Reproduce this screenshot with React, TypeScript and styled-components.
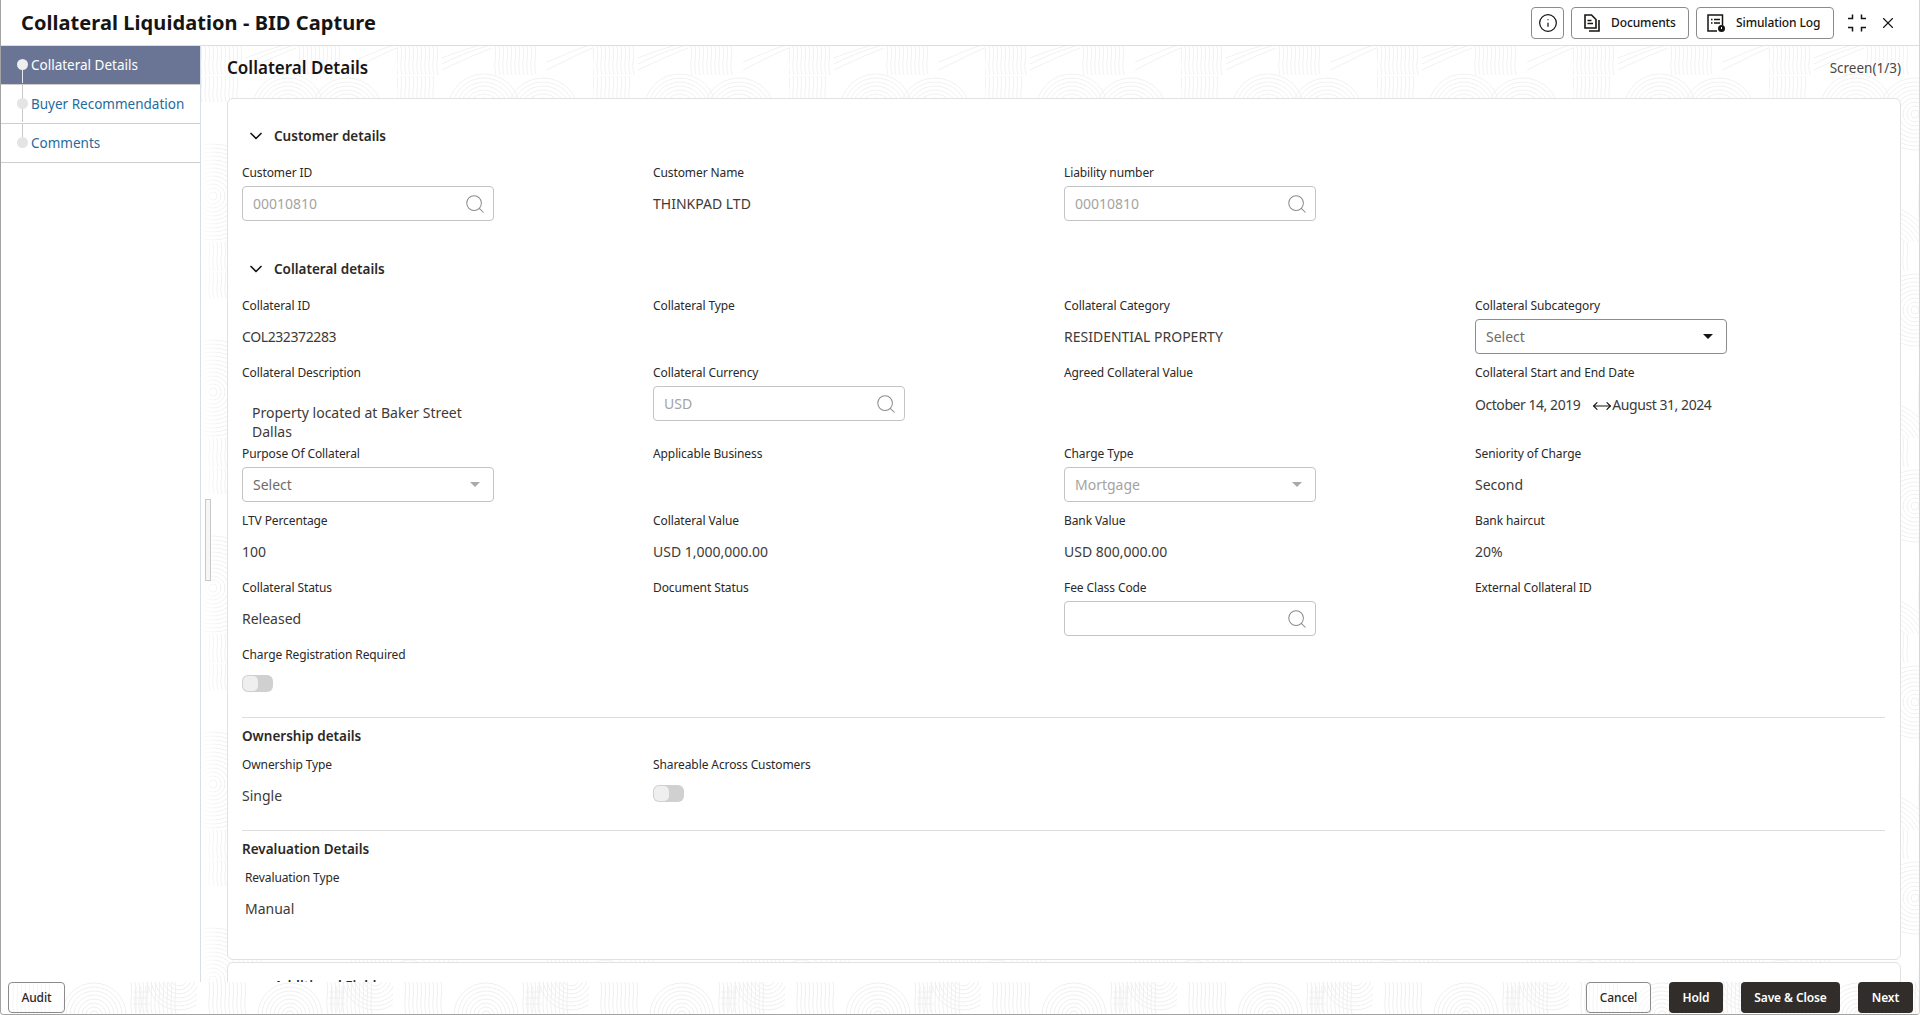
import React from "react";
import styled, { createGlobalStyle } from "styled-components";
import { ChevronDown, Info, MoveHorizontal, Search, X } from "lucide-react";

const Global = createGlobalStyle`
  html, body { margin: 0; padding: 0; background: #fff; }
  * { box-sizing: border-box; }
  body { font-family: "Noto Sans", "Open Sans", sans-serif; color: #161513; }
`;

const Shell = styled.div`
  position: relative;
  height: 1015px;
  width: 1920px;
  display: flex;
  flex-direction: column;
  overflow: hidden;
  border-left: 1px solid #a3a3a3;
  border-right: 1px solid #d6d6d6;
  border-bottom: 1px solid #a3a3a3;
  border-radius: 0 0 4px 4px;
`;

const Header = styled.header`
  height: 46px;
  flex: none;
  display: flex;
  align-items: center;
  justify-content: space-between;
  padding: 0 22px 0 20px;
  border-bottom: 1px solid #dedede;
  background: #fff;
`;

const Title = styled.h1`
  margin: 0;
  font-size: 20px;
  line-height: 28px;
  font-weight: 700;
  letter-spacing: 0.07px;
  color: #161513;
`;

const Actions = styled.div`
  display: flex;
  align-items: center;
  gap: 7px;
`;

const OutlineButton = styled.button<{ $width?: number; $pad?: number }>`
  height: 32px;
  width: ${(p) => (p.$width ? `${p.$width}px` : "auto")};
  padding: 0 0 0 ${(p) => p.$pad ?? 12}px;
  display: inline-flex;
  align-items: center;
  gap: 11px;
  border: 1px solid #8b8b8b;
  border-radius: 4px;
  background: #fff;
  font: 500 12px "Noto Sans", sans-serif;
  letter-spacing: -0.1px;
  color: #161513;
  white-space: nowrap;
`;

const IconSquare = styled(OutlineButton)`
  width: 33px;
  padding: 0;
  justify-content: center;
`;

const WindowIcons = styled.div`
  display: flex;
  align-items: center;
  gap: 12px;
  margin-left: 6px;
`;

const Body = styled.div`
  flex: 1;
  min-height: 0;
  display: flex;
`;

const Sidebar = styled.nav`
  width: 200px;
  flex: none;
  background: #fff;
  border-right: 1px solid #d7dfe8;
`;

const NavItem = styled.div<{ $active?: boolean }>`
  height: 39px;
  display: flex;
  align-items: stretch;
  gap: 4px;
  padding-left: 16px;
  background: ${(p) => (p.$active ? "#6a7494" : "#fff")};
  border-bottom: 1px solid #d0cecb;
  color: ${(p) => (p.$active ? "#fff" : "#1f6b9e")};
  font-size: 13.5px;
`;

const Rail = styled.div`
  width: 10px;
  flex: none;
  display: flex;
  flex-direction: column;
  align-items: center;
`;

const RailLine = styled.span<{ $active?: boolean; $hidden?: boolean; $size: number }>`
  width: 1px;
  height: ${(p) => p.$size}px;
  background: ${(p) => (p.$hidden ? "transparent" : p.$active ? "#e8e8ee" : "#c9c9c9")};
`;

const Dot = styled.span<{ $active?: boolean }>`
  width: 11px;
  height: 11px;
  flex: none;
  border-radius: 50%;
  background: ${(p) => (p.$active ? "#eeeeee" : "#e4e4e4")};
`;

const NavLabel = styled.span`
  line-height: 38px;
  white-space: nowrap;
`;

const Main = styled.main`
  position: relative;
  flex: 1;
  min-width: 0;
  padding: 0 18px 0 26px;
  overflow: hidden;
  &::before {
    content: "";
    position: absolute;
    left: 0;
    top: 60px;
    bottom: 0;
    width: 18px;
    background: linear-gradient(90deg, rgba(255,255,255,0.95), rgba(255,255,255,0));
    z-index: 1;
  }
`;

const PatternSvg = styled.svg`
  position: absolute;
  inset: 0;
  width: 100%;
  height: 100%;
  pointer-events: none;
`;

const Splitter = styled.span`
  position: absolute;
  left: 4px;
  top: 453px;
  width: 6px;
  height: 82px;
  border: 1px solid #c8c8c8;
  background: #f6f6f6;
  z-index: 2;
`;

const ContentHead = styled.div`
  position: relative;
  height: 52px;
  display: flex;
  align-items: center;
  justify-content: space-between;
  padding-bottom: 8px;
`;

const PageTitle = styled.h2`
  margin: 0;
  font-size: 17px;
  line-height: 24px;
  font-weight: 600;
  color: #161513;
`;

const ScreenCount = styled.span`
  font-size: 13.5px;
  color: #4a4744;
`;

const Card = styled.section`
  position: relative;
  background: #fff;
  border: 1px solid #e2e2e2;
  border-radius: 6px;
  padding: 24px 15px 24px 14px;
`;

const NextCard = styled(Card)`
  margin-top: 2px;
  height: 60px;
  padding: 10px 15px 0 14px;
`;

const AccordionHead = styled.div<{ $gap?: number }>`
  height: 24px;
  display: flex;
  align-items: center;
  gap: 8px;
  padding: 1px 0 0 4px;
  margin-top: ${(p) => p.$gap ?? 0}px;
  margin-bottom: 16px;
  font-size: 13.5px;
  font-weight: 600;
  color: #2b2927;
`;

const Grid = styled.div`
  display: grid;
  grid-template-columns: repeat(4, 411px);
`;

const Field = styled.div<{ $indent?: number }>`
  padding-bottom: 9px;
  padding-left: ${(p) => p.$indent ?? 0}px;
  min-width: 0;
`;

const Label = styled.div`
  height: 20px;
  line-height: 20px;
  font-size: 12px;
  letter-spacing: -0.1px;
  color: #2b2927;
  margin-bottom: 4px;
  white-space: nowrap;
`;

const Value = styled.div<{ $tight?: boolean }>`
  height: 34px;
  line-height: 34px;
  font-size: 14px;
  letter-spacing: ${(p) => (p.$tight ? "-0.4px" : "normal")};
  color: #3d3a38;
  white-space: nowrap;
`;

const Description = styled.div`
  height: 48px;
  padding: 16px 0 0 10px;
  font-size: 14px;
  line-height: 19px;
  color: #3d3a38;
  width: 252px;
`;

const Box = styled.div<{ $strong?: boolean }>`
  width: 252px;
  height: 35px;
  margin-top: -1px;
  display: flex;
  align-items: center;
  justify-content: space-between;
  padding: 0 10px;
  background: #fff;
  border: 1px solid ${(p) => (p.$strong ? "#8d8d8d" : "#c4c4c4")};
  border-radius: 4px;
  font-size: 14px;
  color: ${(p) => (p.$strong ? "#6f6c6a" : "#a5a3a1")};
`;

const SelectText = styled.span<{ $dark?: boolean }>`
  color: ${(p) => (p.$dark ? "#6f6c6a" : "inherit")};
`;

const Caret = styled.span<{ $dark?: boolean }>`
  width: 0;
  height: 0;
  margin-right: 3px;
  border-left: 5px solid transparent;
  border-right: 5px solid transparent;
  border-top: 5px solid ${(p) => (p.$dark ? "#161513" : "#a9a9a9")};
`;

const DateRange = styled.div`
  height: 34px;
  display: flex;
  align-items: center;
  font-size: 14px;
  letter-spacing: -0.45px;
  color: #3d3a38;
  white-space: nowrap;
`;

const RangeGlyph = styled.span`
  display: inline-flex;
  margin: 3px 0 0 12px;
  color: #161513;
`;

const ToggleSlot = styled.div`
  height: 34px;
  padding-top: 6px;
`;

const Toggle = styled.span`
  display: block;
  width: 31px;
  height: 17px;
  border-radius: 6px;
  background: #d0d0d0;
  padding: 1px;
`;

const Knob = styled.span`
  display: block;
  width: 15px;
  height: 15px;
  border-radius: 5px;
  background: #efefef;
`;

const Divider = styled.hr<{ $top: number }>`
  margin: ${(p) => p.$top}px 0 6px;
  border: 0;
  border-top: 1px solid #dedede;
  height: 0;
`;

const SubHead = styled.div`
  height: 24px;
  line-height: 24px;
  margin-bottom: 7px;
  font-size: 13.5px;
  font-weight: 600;
  color: #2b2927;
`;

const Footer = styled.footer`
  position: relative;
  flex: none;
  height: 32px;
  display: flex;
  align-items: flex-start;
  justify-content: space-between;
  padding: 0 6px 0 7px;
  background: #fff;
`;

const FooterGroup = styled.div`
  position: relative;
  display: flex;
  gap: 18px;
`;

const FooterOutline = styled.button<{ $width: number }>`
  height: 31px;
  width: ${(p) => p.$width}px;
  padding: 0;
  border: 1px solid #8b8b8b;
  border-radius: 4px;
  background: rgba(255,255,255,0.4);
  font: 500 12px "Noto Sans", sans-serif;
  letter-spacing: -0.1px;
  color: #2b2927;
`;

const FooterSolid = styled.button<{ $width: number }>`
  height: 31px;
  width: ${(p) => p.$width}px;
  padding: 0;
  border: 0;
  border-radius: 4px;
  background: #312d2a;
  font: 600 12px "Noto Sans", sans-serif;
  letter-spacing: -0.1px;
  color: #fff;
`;

const SearchGlyph = styled(Search)`
  margin-right: -3px;
  flex: none;
`;

const SearchIcon = () => <SearchGlyph size={22} strokeWidth={1.1} color="#8b8b8b" />;

const DocIcon = () => (
  <svg width="16" height="18" viewBox="0 0 16 18" fill="none" stroke="#161513" strokeWidth="1.6">
    <path d="M1 1h6.5L12 5.5V14H1z" />
    <path d="M3.5 6.5h4M3.5 9.5h5.5" />
    <path d="M15 6v11H5" />
  </svg>
);

const LogIcon = () => (
  <svg width="18" height="18" viewBox="0 0 18 18" fill="none" stroke="#161513" strokeWidth="1.5">
    <path d="M10 17H1V1h14.5v10.5" />
    <path d="M4 5.5h1.5M7 5.5h6M4 9h1.5M7 9h6" />
    <circle cx="14.5" cy="14.5" r="3.5" fill="#161513" stroke="none" />
    <path d="M14.5 13v2" stroke="#fff" strokeWidth="1" />
  </svg>
);

const CollapseIcon = () => (
  <svg width="20" height="18" viewBox="0 0 20 18" fill="none" stroke="#161513" strokeWidth="1.5">
    <path d="M5.5 0.5v4H1M14.5 0.5v4H19M5.5 17.5v-4H1M14.5 17.5v-4H19" />
  </svg>
);

const rings = (cx: number, cy: number, max: number) => {
  const out: React.ReactElement[] = [];
  for (let r = 4; r <= max; r += 4) {
    out.push(<circle key={`${cx}-${cy}-${r}`} cx={cx} cy={cy} r={r} />);
  }
  return out;
};

const hatch = (x0: number, x1: number, y0: number, y1: number) => {
  const out: React.ReactElement[] = [];
  for (let x = x0; x <= x1; x += 4) {
    out.push(<path key={`${x}-${y0}`} d={`M${x} ${y0}C${x + 2} ${(y0 + y1) / 2} ${x - 2} ${(y0 + y1) / 2} ${x + 1} ${y1}`} />);
  }
  return out;
};

const MainPattern = () => (
  <PatternSvg aria-hidden="true">
    <defs>
      <pattern id="mainTile" width="196" height="196" patternUnits="userSpaceOnUse">
        <g fill="none" stroke="#f1f1f1" strokeWidth="1">
          <g>{hatch(0, 40, 0, 29)}</g>
          <g>{hatch(98, 140, 0, 29)}</g>
          <path d="M45 24C70 12 85 6 95 2M45 18C65 8 80 3 90 0M45 12C60 6 70 3 80 0M150 24C170 14 185 6 196 2M150 16C170 8 180 3 190 0" />
          <g>{rings(87, 64, 36)}</g>
          <g>{rings(146, 68, 36)}</g>
          <g>{hatch(0, 36, 30, 56)}</g>
          <g>{rings(12, 150, 52)}</g>
          <g>{rings(110, 215, 56)}</g>
          <g>{hatch(150, 192, 100, 190)}</g>
        </g>
      </pattern>
    </defs>
    <rect width="100%" height="100%" fill="url(#mainTile)" />
  </PatternSvg>
);

const FooterPattern = () => (
  <PatternSvg aria-hidden="true">
    <defs>
      <pattern id="footTile" width="196" height="32" patternUnits="userSpaceOnUse">
        <g fill="none" stroke="#efefef" strokeWidth="1">
          <g>{rings(93, 33, 32)}</g>
          <g>{hatch(130, 174, 0, 32)}</g>
          <g>{rings(178, -4, 34)}</g>
          <path d="M135 4v26M140 4v26M145 4v26M132 10h16M132 16h16M132 22h16" />
          <g>{hatch(12, 50, 0, 32)}</g>
        </g>
      </pattern>
    </defs>
    <rect width="100%" height="100%" fill="url(#footTile)" />
  </PatternSvg>
);

const steps = [
  { name: "Collateral Details", active: true },
  { name: "Buyer Recommendation" },
  { name: "Comments" },
];

export default function App() {
  return (
    <>
      <Global />
      <Shell>
        <Header>
          <Title>Collateral Liquidation - BID Capture</Title>
          <Actions>
            <IconSquare aria-label="Info"><Info size={20} strokeWidth={1.5} /></IconSquare>
            <OutlineButton $width={118} $pad={12}><DocIcon />Documents</OutlineButton>
            <OutlineButton $width={138} $pad={10}><LogIcon />Simulation Log</OutlineButton>
            <WindowIcons>
              <CollapseIcon />
              <X size={18} strokeWidth={1.5} />
            </WindowIcons>
          </Actions>
        </Header>
        <Body>
          <Sidebar>
            {steps.map((s, i) => (
              <NavItem key={s.name} $active={s.active}>
                <Rail>
                  <RailLine $size={13} $hidden={i === 0} />
                  <Dot $active={s.active} />
                  <RailLine $size={13} $active={s.active} $hidden={i === 2} />
                </Rail>
                <NavLabel>{s.name}</NavLabel>
              </NavItem>
            ))}
          </Sidebar>
          <Main>
            <MainPattern />
            <Splitter />
            <ContentHead>
              <PageTitle>Collateral Details</PageTitle>
              <ScreenCount>Screen(1/3)</ScreenCount>
            </ContentHead>
            <Card>
              <AccordionHead>
                <ChevronDown size={20} strokeWidth={2} color="#161513" />
                Customer details
              </AccordionHead>
              <Grid>
                <Field>
                  <Label>Customer ID</Label>
                  <Box>00010810<SearchIcon /></Box>
                </Field>
                <Field>
                  <Label>Customer Name</Label>
                  <Value>THINKPAD LTD</Value>
                </Field>
                <Field>
                  <Label>Liability number</Label>
                  <Box>00010810<SearchIcon /></Box>
                </Field>
              </Grid>
              <AccordionHead $gap={26}>
                <ChevronDown size={20} strokeWidth={2} color="#161513" />
                Collateral details
              </AccordionHead>
              <Grid>
                <Field><Label>Collateral ID</Label><Value $tight>COL232372283</Value></Field>
                <Field><Label>Collateral Type</Label><Value /></Field>
                <Field><Label>Collateral Category</Label><Value>RESIDENTIAL PROPERTY</Value></Field>
                <Field>
                  <Label>Collateral Subcategory</Label>
                  <Box $strong>Select<Caret $dark /></Box>
                </Field>

                <Field>
                  <Label>Collateral Description</Label>
                  <Description>Property located at Baker Street Dallas</Description>
                </Field>
                <Field>
                  <Label>Collateral Currency</Label>
                  <Box>USD<SearchIcon /></Box>
                </Field>
                <Field><Label>Agreed Collateral Value</Label></Field>
                <Field>
                  <Label>Collateral Start and End Date</Label>
                  <DateRange>
                    October 14, 2019
                    <RangeGlyph><MoveHorizontal size={20} strokeWidth={1.4} /></RangeGlyph>
                    August 31, 2024
                  </DateRange>
                </Field>

                <Field>
                  <Label>Purpose Of Collateral</Label>
                  <Box><SelectText $dark>Select</SelectText><Caret /></Box>
                </Field>
                <Field><Label>Applicable Business</Label></Field>
                <Field>
                  <Label>Charge Type</Label>
                  <Box>Mortgage<Caret /></Box>
                </Field>
                <Field><Label>Seniority of Charge</Label><Value>Second</Value></Field>

                <Field><Label>LTV Percentage</Label><Value>100</Value></Field>
                <Field><Label>Collateral Value</Label><Value>USD 1,000,000.00</Value></Field>
                <Field><Label>Bank Value</Label><Value>USD 800,000.00</Value></Field>
                <Field><Label>Bank haircut</Label><Value>20%</Value></Field>

                <Field><Label>Collateral Status</Label><Value>Released</Value></Field>
                <Field><Label>Document Status</Label></Field>
                <Field>
                  <Label>Fee Class Code</Label>
                  <Box><span /><SearchIcon /></Box>
                </Field>
                <Field><Label>External Collateral ID</Label></Field>

                <Field>
                  <Label>Charge Registration Required</Label>
                  <ToggleSlot><Toggle><Knob /></Toggle></ToggleSlot>
                </Field>
              </Grid>
              <Divider $top={5} />
              <SubHead>Ownership details</SubHead>
              <Grid>
                <Field><Label>Ownership Type</Label><Value>Single</Value></Field>
                <Field>
                  <Label>Shareable Across Customers</Label>
                  <ToggleSlot><Toggle><Knob /></Toggle></ToggleSlot>
                </Field>
              </Grid>
              <Divider $top={8} />
              <SubHead>Revaluation Details</SubHead>
              <Grid>
                <Field $indent={3}><Label>Revaluation Type</Label><Value>Manual</Value></Field>
              </Grid>
            </Card>
            <NextCard>
              <AccordionHead>
                <ChevronDown size={20} strokeWidth={2} color="#161513" />
                Additional Fields
              </AccordionHead>
            </NextCard>
          </Main>
        </Body>
        <Footer>
          <FooterPattern />
          <FooterGroup>
            <FooterOutline $width={57}>Audit</FooterOutline>
          </FooterGroup>
          <FooterGroup>
            <FooterOutline $width={65}>Cancel</FooterOutline>
            <FooterSolid $width={54}>Hold</FooterSolid>
            <FooterSolid $width={99}>Save &amp; Close</FooterSolid>
            <FooterSolid $width={55}>Next</FooterSolid>
          </FooterGroup>
        </Footer>
      </Shell>
    </>
  );
}
